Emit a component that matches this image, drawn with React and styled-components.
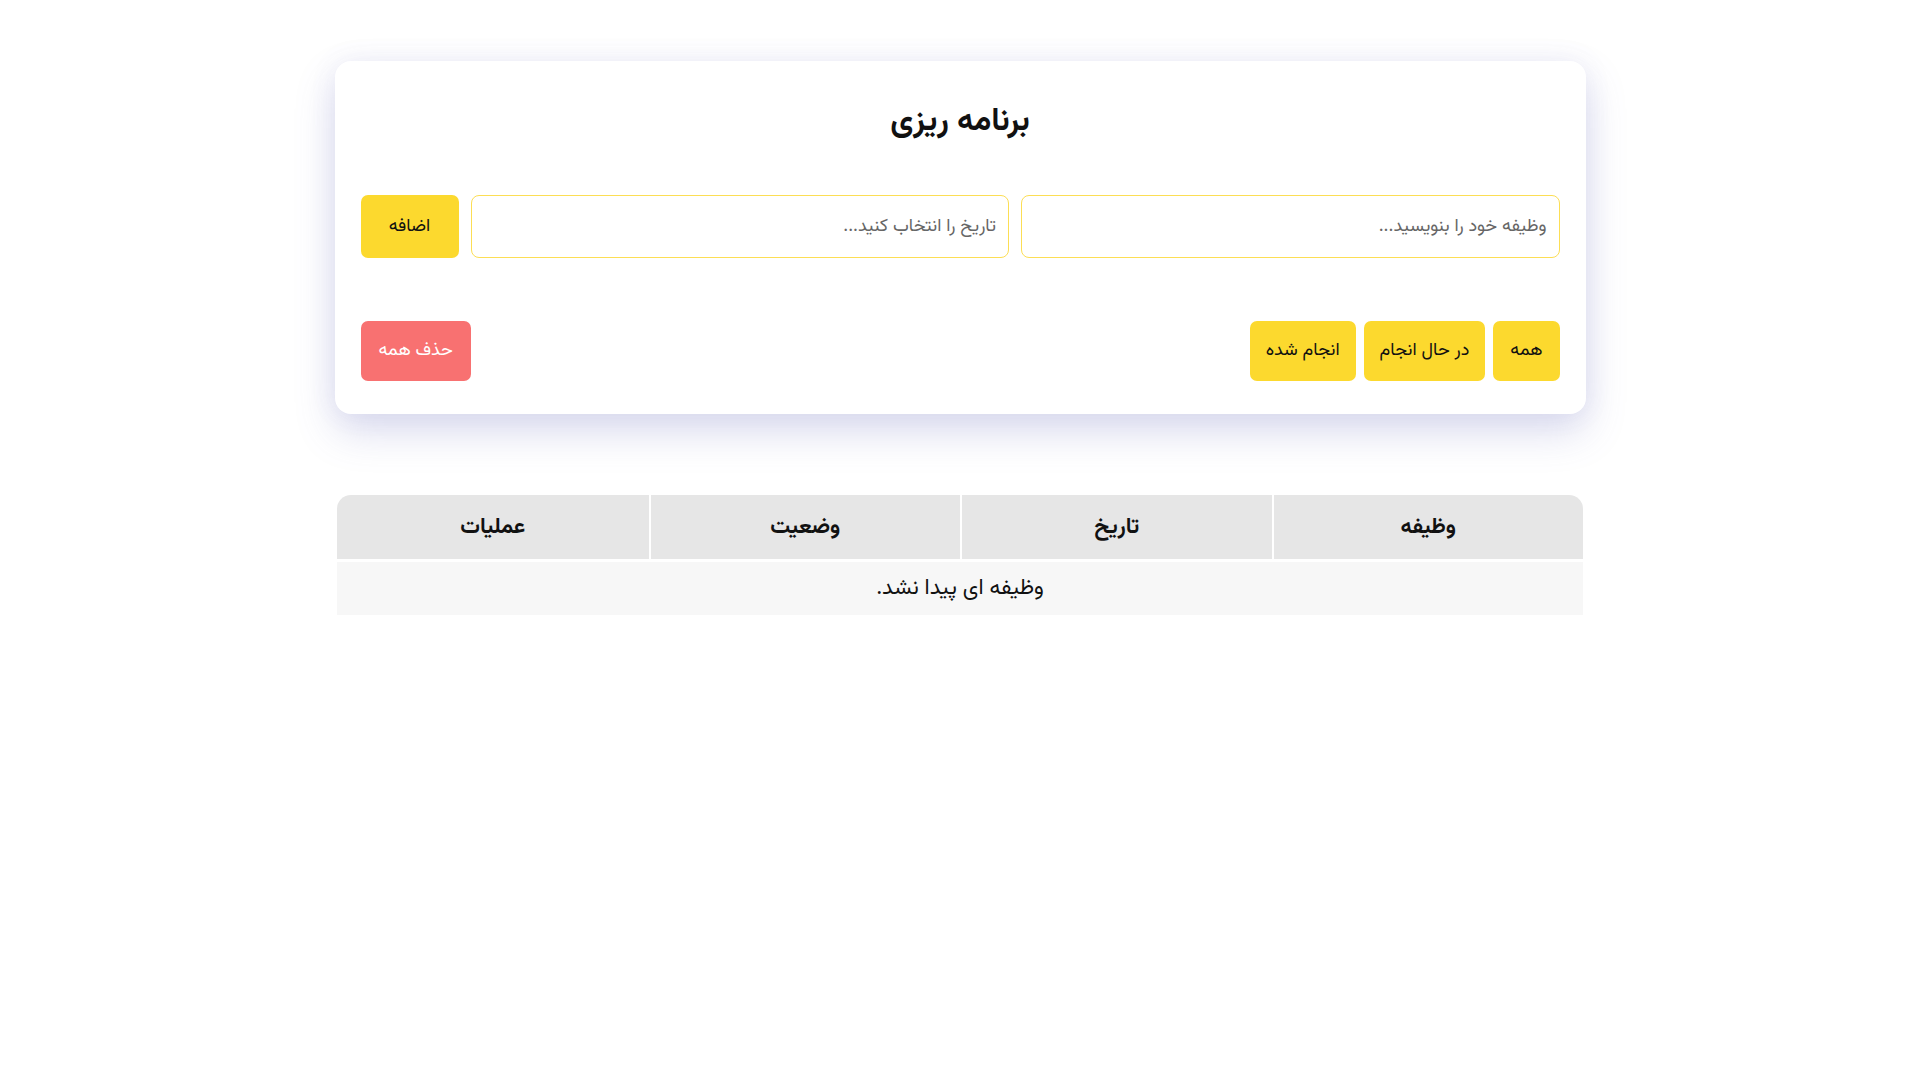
import React from "react";
import styled, { createGlobalStyle } from "styled-components";

const Global = createGlobalStyle`
  html, body { margin: 0; padding: 0; background: #ffffff; }
  body {
    font-family: "Vazirmatn", "Noto Sans Arabic", "DejaVu Sans", sans-serif;
    color: #111;
  }
  * { box-sizing: border-box; }
`;

const Page = styled.main`
  direction: rtl;
  width: 1251px;
  margin: 0 auto;
  padding-top: 61px;
  display: flex;
  flex-direction: column;
  align-items: center;
  gap: 81px;
`;

const Card = styled.section`
  width: 1251px;
  background: #fff;
  border-radius: 16px;
  padding: 24px 26px 33px;
  box-shadow: 0 18px 40px rgba(90, 95, 180, 0.22), 0 0 28px rgba(90, 95, 180, 0.08);
  display: flex;
  flex-direction: column;
`;

const Title = styled.h1`
  margin: 13px 0 49px;
  font-size: 32px;
  line-height: 48px;
  font-weight: 700;
  text-align: center;
  color: #111;
`;

const InputRow = styled.div`
  display: flex;
  gap: 12px;
  height: 63px;
  margin-bottom: 63px;
`;

const Field = styled.input`
  flex: 1;
  min-width: 0;
  height: 100%;
  border: 1.5px solid #fcde55;
  border-radius: 8px;
  padding: 0 12px;
  font-family: inherit;
  font-size: 18px;
  direction: rtl;
  outline: none;
  color: #222;
  &::placeholder { color: #666; }
`;

const Button = styled.button`
  border: none;
  border-radius: 7px;
  background: ${(p) => (p.$danger ? "#f87171" : "#fcd92e")};
  color: ${(p) => (p.$danger ? "#fff" : "#111")};
  font-family: inherit;
  font-size: 18px;
  padding: 0 ${(p) => p.$px || 16}px;
  height: ${(p) => p.$h || 60}px;
  min-width: ${(p) => p.$w || 0}px;
  cursor: pointer;
  white-space: nowrap;
`;

const FilterRow = styled.div`
  display: flex;
  justify-content: space-between;
  align-items: center;
`;

const FilterGroup = styled.div`
  display: flex;
  gap: 8px;
`;

const Table = styled.table`
  width: 1246px;
  border-collapse: separate;
  border-spacing: 0;
  direction: rtl;
`;

const Th = styled.th`
  width: 25%;
  height: 67px;
  background: #e6e6e6;
  font-size: 22px;
  font-weight: 700;
  border-left: 2px solid #fff;
  border-bottom: 3px solid #fff;
  &:first-child { border-top-right-radius: 14px; }
  &:last-child { border-top-left-radius: 14px; border-left: none; }
`;

const Td = styled.td`
  height: 53px;
  background: #f7f7f7;
  text-align: center;
  font-size: 22px;
`;

export default function App() {
  return (
    <>
      <Global />
      <Page>
        <Card>
          <Title>برنامه ریزی</Title>
          <InputRow>
            <Field placeholder="وظیفه خود را بنویسید..." />
            <Field placeholder="تاریخ را انتخاب کنید..." />
            <Button $h={63} $w={98} $px={20}>اضافه</Button>
          </InputRow>
          <FilterRow>
            <FilterGroup>
              <Button $px={17}>همه</Button>
              <Button $px={16}>در حال انجام</Button>
              <Button $px={16}>انجام شده</Button>
            </FilterGroup>
            <Button $danger $px={18}>حذف همه</Button>
          </FilterRow>
        </Card>
        <Table>
          <thead>
            <tr>
              <Th>وظیفه</Th>
              <Th>تاریخ</Th>
              <Th>وضعیت</Th>
              <Th>عملیات</Th>
            </tr>
          </thead>
          <tbody>
            <tr>
              <Td colSpan={4}>وظیفه ای پیدا نشد.</Td>
            </tr>
          </tbody>
        </Table>
      </Page>
    </>
  );
}
